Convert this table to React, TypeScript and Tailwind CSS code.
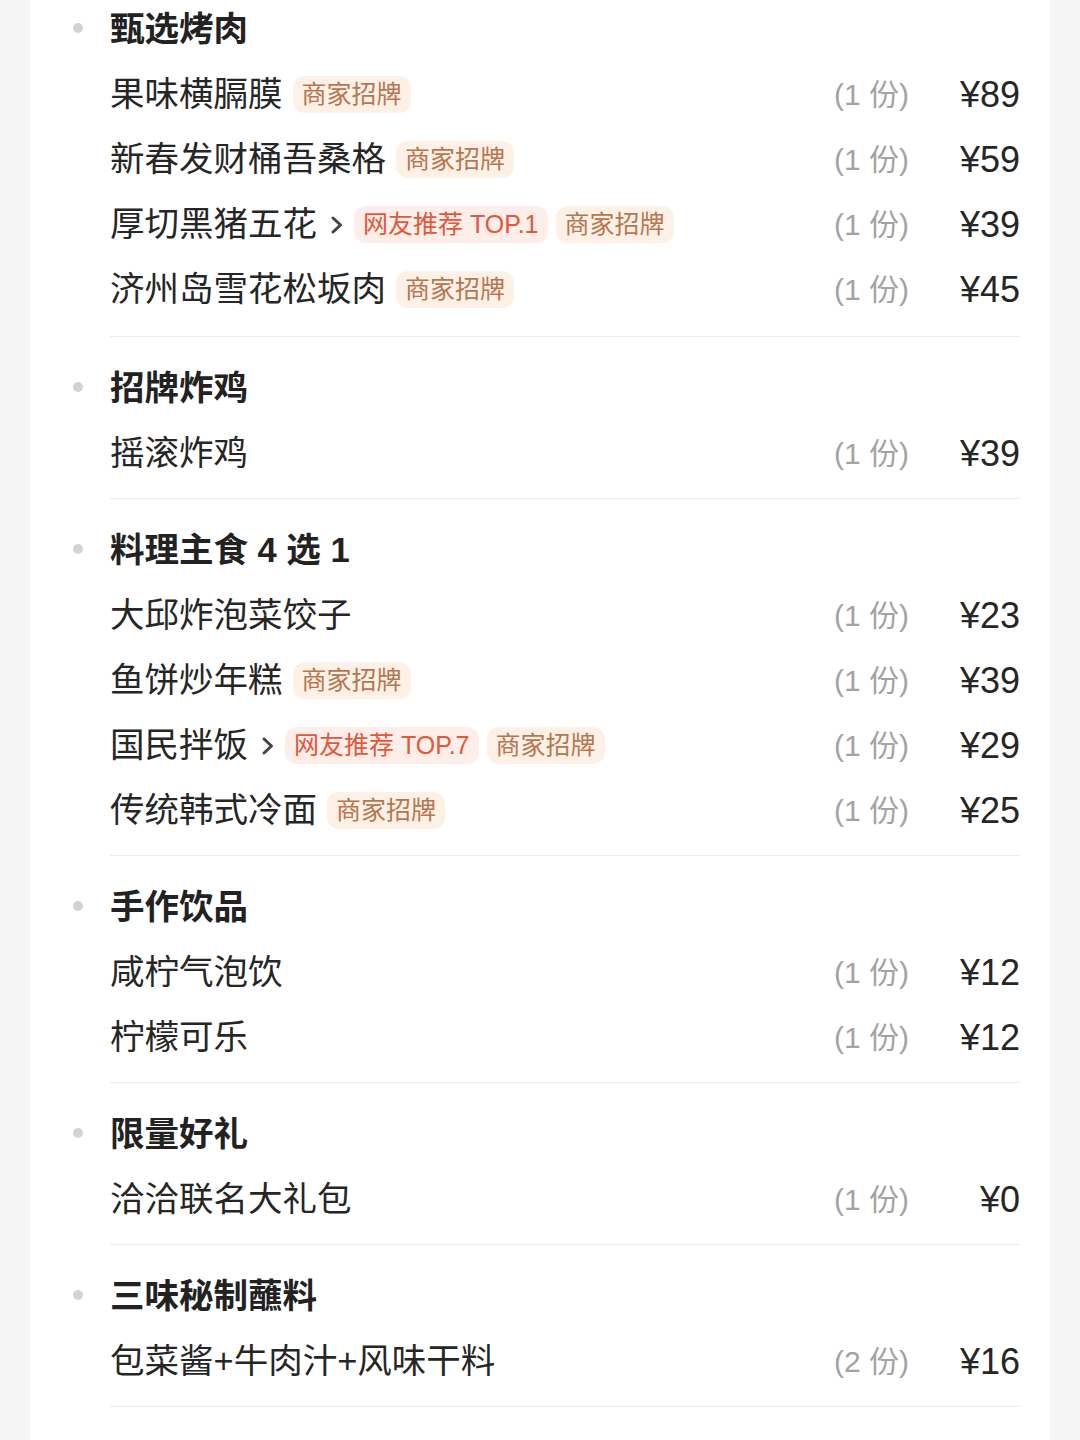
import React from "react";

type Tag = { text: string; kind: "hot" | "brand" };
type Item = { name: string; arrow?: boolean; tags?: Tag[]; qty: number; price: string };
type Section = { title: string; items: Item[] };

const brand: Tag = { text: "商家招牌", kind: "brand" };

const sections: Section[] = [
  {
    title: "甄选烤肉",
    items: [
      { name: "果味横膈膜", tags: [brand], qty: 1, price: "¥89" },
      { name: "新春发财桶吾桑格", tags: [brand], qty: 1, price: "¥59" },
      { name: "厚切黑猪五花", arrow: true, tags: [{ text: "网友推荐 TOP.1", kind: "hot" }, brand], qty: 1, price: "¥39" },
      { name: "济州岛雪花松坂肉", tags: [brand], qty: 1, price: "¥45" },
    ],
  },
  { title: "招牌炸鸡", items: [{ name: "摇滚炸鸡", qty: 1, price: "¥39" }] },
  {
    title: "料理主食 4 选 1",
    items: [
      { name: "大邱炸泡菜饺子", qty: 1, price: "¥23" },
      { name: "鱼饼炒年糕", tags: [brand], qty: 1, price: "¥39" },
      { name: "国民拌饭", arrow: true, tags: [{ text: "网友推荐 TOP.7", kind: "hot" }, brand], qty: 1, price: "¥29" },
      { name: "传统韩式冷面", tags: [brand], qty: 1, price: "¥25" },
    ],
  },
  {
    title: "手作饮品",
    items: [
      { name: "咸柠气泡饮", qty: 1, price: "¥12" },
      { name: "柠檬可乐", qty: 1, price: "¥12" },
    ],
  },
  { title: "限量好礼", items: [{ name: "洽洽联名大礼包", qty: 1, price: "¥0" }] },
  { title: "三味秘制蘸料", items: [{ name: "包菜酱+牛肉汁+风味干料", qty: 2, price: "¥16" }] },
];

function Chevron() {
  return (
    <svg width="14" height="22" viewBox="0 0 14 22" className="ml-[13px] shrink-0">
      <polyline points="3,4 10.5,11 3,18" fill="none" stroke="#444444" strokeWidth="3" strokeLinecap="round" strokeLinejoin="round" />
    </svg>
  );
}

function TagPill({ tag }: { tag: Tag }) {
  return tag.kind === "hot" ? (
    <span className="ml-[10px] h-[37px] px-[9px] rounded-[12px] bg-[#fdeeea] text-[#e0593b] text-[25px] leading-[37px] whitespace-nowrap">
      {tag.text}
    </span>
  ) : (
    <span className="ml-[10px] h-[37px] px-[9px] rounded-[12px] bg-[#fdf1e6] text-[#b67651] text-[25px] leading-[37px] whitespace-nowrap">
      {tag.text}
    </span>
  );
}

export default function App() {
  return (
    <div
      className="min-h-[1440px] bg-[#f5f5f5] overflow-hidden"
      style={{ fontFamily: '"Liberation Sans", "Noto Sans CJK SC", sans-serif' }}
    >
      <div className="ml-[30px] w-[1020px] min-h-[1445px] bg-white pl-[80px] pr-[30px] -mt-[5px]">
        {sections.map((s, si) => (
          <div
            key={s.title}
            className={`${si === 0 ? "pt-0 pb-[16px]" : "pt-[17px] pb-[14px]"} border-b border-[#ebebeb]`}
          >
            <div className="h-[65px] pt-[4px] flex items-center">
              <span className="-ml-[37px] mr-[27px] w-[10px] h-[10px] rounded-full bg-[#d3d3d3] shrink-0 -translate-y-[2px]" />
              <span className="text-[34.5px] font-bold text-[#222222] whitespace-nowrap">{s.title}</span>
            </div>
            {s.items.map((it) => (
              <div key={it.name} className="h-[65px] pt-[4px] flex items-center">
                <span className="text-[34.5px] text-[#262626] whitespace-nowrap">{it.name}</span>
                {it.arrow && <Chevron />}
                {it.tags?.map((t, ti) => (
                  <span key={ti} className={ti > 0 ? "-ml-[2px] flex" : "flex"}>
                    <TagPill tag={t} />
                  </span>
                ))}
                <span className="ml-auto text-[30px] text-[#a3a3a3] whitespace-nowrap">({it.qty} 份)</span>
                <span className="w-[111px] text-right text-[36px] text-[#262626] whitespace-nowrap">{it.price}</span>
              </div>
            ))}
          </div>
        ))}
      </div>
    </div>
  );
}
